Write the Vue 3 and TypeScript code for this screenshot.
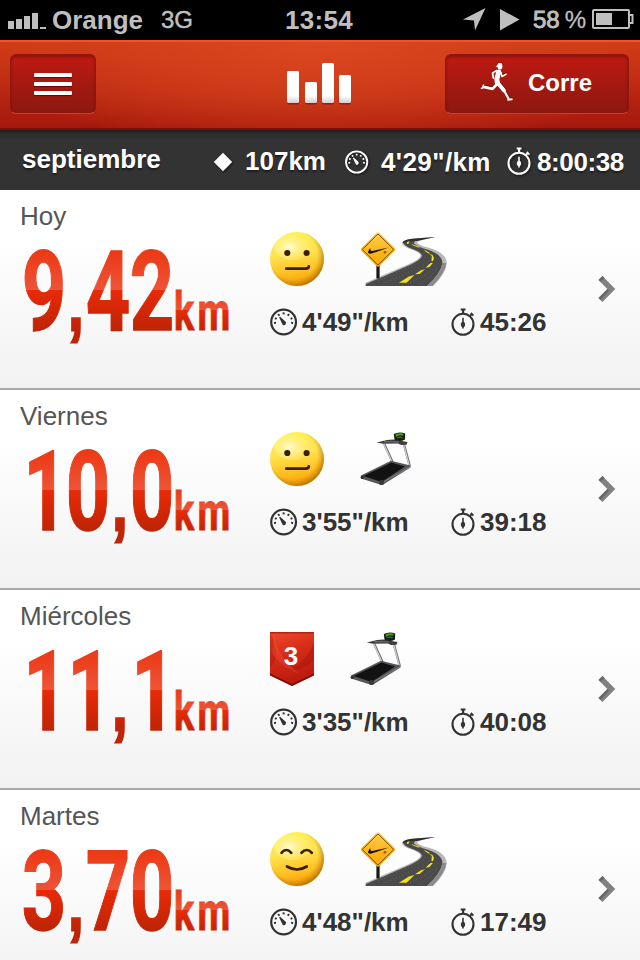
<template>
  <div class="app">
    <!-- Status bar -->
    <div class="status">
      <svg class="signal" width="38" height="16" viewBox="0 0 38 16">
        <path d="M0 8h6v8H0zM8 6h6v10H8zM16 3h6v13h-6zM24 0h6v16h-6zM32 14h6v2h-6z" fill="#bfbfbf" />
      </svg>
      <span class="carrier">Orange</span>
      <span class="network">3G</span>
      <span class="clock">13:54</span>
      <div class="status-right">
        <svg class="location" width="23" height="23" viewBox="0 0 23 23">
          <path d="M22.5 0 L12 22.5 L11 12.5 L0 11.5Z" fill="#bfbfbf" />
        </svg>
        <svg class="play" width="20" height="22" viewBox="0 0 20 22">
          <path d="M0 0 L19.5 10.5 L0 21.5Z" fill="#bfbfbf" />
        </svg>
        <span class="battery-text">58<span class="percent">%</span></span>
        <svg class="battery" width="42" height="20" viewBox="0 0 42 20">
          <rect x="1" y="1" width="36" height="18" rx="1" fill="none" stroke="#bfbfbf" stroke-width="2" />
          <rect x="4" y="4" width="16" height="12" fill="#bfbfbf" />
          <path d="M37 6h3.5v8H37" fill="none" stroke="#bfbfbf" stroke-width="2" />
        </svg>
      </div>
    </div>

    <!-- Navigation -->
    <header class="nav">
      <button class="btn btn-menu">
        <i></i><i></i><i></i>
      </button>
      <svg class="logo" width="66" height="44" viewBox="0 0 66 44">
        <defs>
          <linearGradient id="bar" x1="0" y1="0" x2="0" y2="42" gradientUnits="userSpaceOnUse">
            <stop offset="0.8" stop-color="#fff" />
            <stop offset="1" stop-color="#c9c9c9" />
          </linearGradient>
        </defs>
        <g fill="#7a1408" opacity="0.6" transform="translate(0 1.5)">
          <rect v-for="b in logoBars" :key="b.x" :x="b.x" :y="b.y" width="12" :height="41 - b.y" rx="1.5" />
        </g>
        <g fill="url(#bar)">
          <rect v-for="b in logoBars" :key="b.x" :x="b.x" :y="b.y" width="12" :height="41 - b.y" rx="1.5" />
        </g>
      </svg>
      <button class="btn btn-run">
        <svg width="34" height="40" viewBox="0 0 34 40">
          <g fill="none" stroke="#fff" stroke-linecap="round" stroke-linejoin="round">
            <path d="M18.7 10 L16.8 17 L17.5 21.5" stroke-width="5" />
            <path d="M16.5 8.5 L12.6 11 L13.3 16" stroke-width="1.8" />
            <path d="M21 10.5 L22 14.5 L26 12.2" stroke-width="1.6" />
            <path d="M17 22 L12.5 26.9 L5 25.2" stroke-width="2.8" />
            <path d="M5 25.2 L1.5 26.3 M3.5 23 L2.5 26" stroke-width="1.6" />
            <path d="M18.3 21.5 L24 28.5" stroke-width="3.8" />
            <path d="M24 28.5 L28.6 36.8" stroke-width="2.2" />
            <path d="M28.3 37.8 L31.8 37.2" stroke-width="2" />
          </g>
          <ellipse cx="19.9" cy="4.2" rx="2.5" ry="3.4" fill="#fff" />
          <path d="M20 1 L15.5 4.5 L19 5Z" fill="#fff" />
        </svg>
        <span>Corre</span>
      </button>
    </header>

    <!-- Month summary -->
    <div class="summary">
      <span class="month">{{ month.name }}</span>
      <svg class="diamond" width="20" height="20" viewBox="0 0 20 20">
        <path d="M10 0.7 L19.2 10 L10 19.3 L0.8 10Z" fill="#fff" />
      </svg>
      <span class="total">{{ month.distance }}</span>
      <svg class="sum-gauge" width="24" height="24" viewBox="0 0 28 28">
        <use href="#gauge" />
      </svg>
      <span class="sum-pace">{{ month.pace }}</span>
      <svg class="sum-watch" width="24" height="28" viewBox="0 0 24 28">
        <use href="#watch" />
      </svg>
      <span class="sum-time">{{ month.time }}</span>
    </div>

    <!-- Runs -->
    <div v-for="run in runs" :key="run.day" class="run">
      <div class="run-main">
        <div class="day">{{ run.day }}</div>
        <svg class="distance" width="230" height="110" viewBox="0 0 230 110">
          <g :transform="`scale(${digitScale} 1)`">
            <text class="digits" y="99"><tspan v-for="(g, i) in glyphs(run.distance)" :key="i" :x="g.x" :class="{ comma: g.char === ',' }">{{ g.char }}</tspan></text>
          </g>
          <g transform="scale(0.7 1)">
            <text class="unit" x="220 253.5" y="99">km</text>
          </g>
        </svg>
      </div>
      <div class="run-detail">
        <div class="badges">
          <svg v-if="run.badge === 'flag'" width="44" height="54" viewBox="0 0 44 54">
            <path d="M0 0H44V43L22 54L0 43Z" fill="url(#flagFill)" />
            <path d="M0 0 Q12 25 0 36Z M44 9 Q38 29 19 38 Q35 38 44 28Z" fill="#8b1008" opacity="0.28" />
            <path d="M4 6 Q10 27 30 42 Q14 37 2 22Z" fill="#ff6a4d" opacity="0.22" />
            <path d="M0 41.5 L22 52 L44 41.5 V43.5 L22 54 L0 43.5Z" fill="#7d0f0b" />
            <path d="M0 0.7H44" stroke="#b32312" stroke-width="1.4" />
            <text class="flag-text" x="21" y="33">3</text>
          </svg>
          <svg v-else width="54" height="54" viewBox="0 0 54 54">
            <circle cx="27" cy="27" r="27" fill="url(#face)" />
            <circle cx="27" cy="27" r="27" fill="url(#faceEdge)" />
            <ellipse cx="23" cy="15" rx="19" ry="13" fill="url(#faceShine)" />
            <g v-if="run.badge === 'neutral'">
              <circle cx="17.3" cy="21" r="3.1" fill="#3b1c05" />
              <circle cx="36.6" cy="21" r="3.1" fill="#3b1c05" />
              <path d="M16.3 36.7H35.5Q38.8 36.7 38.8 34.3" class="face-line" />
            </g>
            <g v-else>
              <path d="M11.5 20.8Q16.3 15.2 21.3 20.8M31.5 20.8Q36.8 15.2 41.8 20.8" class="face-line" />
              <path d="M17 34.5Q27 40.5 36.8 34.5" class="face-line" />
            </g>
          </svg>

          <svg v-if="run.terrain === 'road'" width="88" height="54" viewBox="0 0 88 54">
            <path d="M5.7 50.7 L18.3 45.3 L50 31.5 Q60 27 60.5 23.5 Q60 20 48 16.3 Q41 13 42.3 10.2 Q45 7 58 6.3 L75.5 5 Q60 8 57 10.3 Q58 13 68 15.5 Q86.5 20.5 86.7 31 Q86 42 73 54 H5.7Z" fill="#b8b8b8" />
            <path d="M5.7 52 L20 46 L51 32.5 Q62 27 62 23.5 Q61 19.5 49 15.7 Q42.5 12.5 43.5 10.2 Q46 7.7 60 6.7 Q53.5 9 54 11.5 Q58 15 67 17.5 Q82 22 82.5 31 Q81 41 67 54 H5.7Z" fill="#4a4a4a" />
            <path d="M82.5 31 Q81 41 67 54 H72.5 Q85 41 86.5 31Z" fill="#8b8b8b" />
            <path d="M42.3 10.2 Q45 7 58 6.3 L75.5 5 L57 9 Q50 8 43.5 11Z" fill="#2d2d2d" />
            <g stroke="#646464" stroke-width="1" stroke-dasharray="1 2.3" fill="none">
              <path d="M18 49 L53 34 Q65 28 66 23" />
              <path d="M24 51 L57 37 Q72 29 71 24" />
              <path d="M50 51 L66 43 Q77 35 78 29" />
              <path d="M60 52 L71 44 L79 34" />
            </g>
            <g fill="#f4e41a">
              <path d="M39 50.7 L49 44.5 L54.5 43 L46.5 50.7Z" />
              <path d="M55 42.3 L61 38.3 L65 37.2 L59.5 42Z" />
              <path d="M65.5 35.8 L70.5 31 L73 30.7 L69.5 35Z" />
              <path d="M71.5 29 L71.8 24 L69.5 22 L72.5 23 L74 26 L73 29Z" />
              <path d="M68.5 21.5 L63.5 18.2 L66 18.7 L70.3 21.3Z" />
              <path d="M58 15.5 L51 12.6 L53 12.4 L60 15.3Z" />
              <path d="M47 12 L47 10 L49.5 9.3 L48.5 11.7Z" />
            </g>
            <rect x="16.4" y="33" width="3.2" height="13.5" fill="#171717" />
            <rect x="5.3" y="4.8" width="25.4" height="25.4" rx="2" transform="rotate(45 18 17.5)" fill="url(#sign)" />
            <rect x="6.9" y="6.4" width="22.2" height="22.2" rx="1" transform="rotate(45 18 17.5)" fill="none" stroke="#6b4300" stroke-width="0.9" />
            <path d="M10.5 15.8 Q5.5 21.7 10.5 21.8 Q12 21.7 28.5 15.5 L13.5 18.8 Q9.3 19.5 10.5 15.8Z" fill="#161106" />
            <circle cx="25" cy="20.3" r="1.3" fill="#8f5d00" />
          </svg>
          <svg v-else width="54" height="54" viewBox="0 0 54 54">
            <path d="M24.3 12 L33 31 M44 12.5 L49.8 34" stroke="#777" stroke-width="2.4" />
            <path d="M23.8 12 L32.5 31 M43.7 12.5 L49.3 34" stroke="#cfcfcf" stroke-width="1.2" />
            <path d="M1 43.5 L31 28.7 L50.5 33.5 L50.5 35.5 L24 52 L20 52.5 L1 46.5Z" fill="#55575a" />
            <path d="M3.5 44 L31.5 30.5 L45 34.5 L21.5 50Z" fill="#121212" />
            <path d="M21.5 51 L50 35" stroke="#85878a" stroke-width="0.9" />
            <circle cx="21.6" cy="50.5" r="2.6" fill="#393b3c" />
            <circle cx="2.4" cy="45.2" r="1.8" fill="#303233" />
            <path d="M16.7 10.4 L27 8 L33 7.5 L47.5 10 L46.5 12.8 L41 13 L38 11.5 L23 11.8Z" fill="#3b3d3e" />
            <path d="M24 9.7 L39 10" stroke="#777" stroke-width="1" />
            <path d="M33.8 2 Q39.5 -1 45.2 1.6 L45 7.5 Q40 10.5 34.5 7.7Z" fill="#191c17" />
            <path d="M35.5 2.6 Q40 0.2 43.7 2 L42.5 3.8 Q39 2.5 36 5Z" fill="#45a51a" />
            <path d="M37 5.8 L40 5 L42.6 6" stroke="#347b17" stroke-width="1.2" fill="none" />
          </svg>
        </div>
        <div class="stats">
          <svg class="gauge" width="28" height="28" viewBox="0 0 28 28">
            <use href="#gauge" />
          </svg>
          <span class="pace">{{ run.pace }}</span>
          <svg class="watch" width="24" height="28" viewBox="0 0 24 28">
            <use href="#watch" />
          </svg>
          <span class="time">{{ run.time }}</span>
        </div>
      </div>
      <svg class="chevron" width="18" height="28" viewBox="0 0 18 28">
        <path d="M2.5 3 L13.3 14 L2.5 25" fill="none" stroke="#818181" stroke-width="5.6" />
        <path d="M0.5 5 L4.5 1 L6.5 3 L2.5 6.6Z M0.5 23 L2.5 25 L11 15.5 L9.5 14Z" fill="#666" />
      </svg>
    </div>

    <!-- Shared symbols and gradients -->
    <svg class="defs" width="0" height="0">
      <defs>
        <g id="gauge">
          <circle cx="13.6" cy="14" r="12.4" fill="none" stroke="currentColor" stroke-width="2.2" />
          <path d="M9.7 9.2 L15.3 14.3 Q15.7 16.8 13.3 16.6Z" fill="currentColor" stroke="currentColor" stroke-width="1.2" />
          <g fill="currentColor">
            <rect v-for="t in ticks" :key="t" x="12.6" y="4.4" width="2" height="2" :transform="`rotate(${t} 13.6 14)`" />
          </g>
        </g>
        <g id="watch">
          <circle cx="12" cy="16.3" r="10.5" fill="none" stroke="currentColor" stroke-width="2.1" />
          <path d="M9.7 0.5h4.8v2h-1.3v3.4h-2.2V2.5H9.7z" fill="currentColor" />
          <path d="M18.8 8 L21 6 M19.8 5 L22.4 7.6" stroke="currentColor" stroke-width="1.8" />
          <path d="M12 9.8 V20.5" stroke="currentColor" stroke-width="1.6" />
          <ellipse cx="12" cy="16.5" rx="2.1" ry="2.8" fill="currentColor" />
        </g>
        <linearGradient id="digitFill" x1="0" y1="19" x2="0" y2="99" gradientUnits="userSpaceOnUse">
          <stop offset="0" stop-color="#ec3814" />
          <stop offset="0.5" stop-color="#ec5437" />
          <stop offset="0.5" stop-color="#e92a07" />
          <stop offset="1" stop-color="#be2406" />
        </linearGradient>
        <linearGradient id="unitFill" x1="0" y1="59" x2="0" y2="99" gradientUnits="userSpaceOnUse">
          <stop offset="0" stop-color="#ec3814" />
          <stop offset="0.5" stop-color="#ec5437" />
          <stop offset="0.5" stop-color="#e92a07" />
          <stop offset="1" stop-color="#c52506" />
        </linearGradient>
        <linearGradient id="face" x1="0.4" y1="0" x2="0.55" y2="1">
          <stop offset="0" stop-color="#fff04f" />
          <stop offset="0.4" stop-color="#ffe24f" />
          <stop offset="0.72" stop-color="#ffc224" />
          <stop offset="1" stop-color="#f29a04" />
        </linearGradient>
        <radialGradient id="faceEdge" cx="0.43" cy="0.43" r="0.58">
          <stop offset="0.76" stop-color="#c97800" stop-opacity="0" />
          <stop offset="1" stop-color="#9a5a00" stop-opacity="0.6" />
        </radialGradient>
        <radialGradient id="faceShine" cx="0.4" cy="0.5" r="0.6">
          <stop offset="0" stop-color="#fffde0" stop-opacity="0.9" />
          <stop offset="1" stop-color="#fff58a" stop-opacity="0.1" />
        </radialGradient>
        <linearGradient id="sign" x1="0" y1="0" x2="1" y2="1">
          <stop offset="0" stop-color="#ffcf5a" />
          <stop offset="0.5" stop-color="#ffb91d" />
          <stop offset="1" stop-color="#f9a500" />
        </linearGradient>
        <linearGradient id="flagFill" x1="0" y1="0" x2="0.3" y2="1">
          <stop offset="0" stop-color="#f04a2c" />
          <stop offset="0.5" stop-color="#d52a17" />
          <stop offset="1" stop-color="#bb1a10" />
        </linearGradient>
      </defs>
    </svg>
  </div>
</template>

<script setup lang="ts">
interface Run {
  day: string;
  distance: string;
  pace: string;
  time: string;
  badge: 'neutral' | 'happy' | 'flag';
  terrain: 'road' | 'treadmill';
}

const month = { name: 'septiembre', distance: '107km', pace: `4'29"/km`, time: '8:00:38' };

const runs: Run[] = [
  { day: 'Hoy', distance: '9,42', pace: `4'49"/km`, time: '45:26', badge: 'neutral', terrain: 'road' },
  { day: 'Viernes', distance: '10,0', pace: `3'55"/km`, time: '39:18', badge: 'neutral', terrain: 'treadmill' },
  { day: 'Miércoles', distance: '11,1', pace: `3'35"/km`, time: '40:08', badge: 'flag', terrain: 'treadmill' },
  { day: 'Martes', distance: '3,70', pace: `4'48"/km`, time: '17:49', badge: 'happy', terrain: 'road' },
];

const logoBars = [
  { x: 1, y: 9 },
  { x: 19, y: 20 },
  { x: 36, y: 1 },
  { x: 53, y: 13 },
];

const ticks = [-96, -66, -34, 0, 34, 66, 96];

// Digits are squeezed horizontally and set in fixed cells
const digitScale = 0.7;
const digitWidth = 44;
const commaWidth = 20;

function glyphs(value: string) {
  let x = 2;
  return [...value].map((char) => {
    const w = char === ',' ? commaWidth : digitWidth;
    const shift = char === '1' ? 1.5 : 0;
    const center = x + w / 2 + shift;
    x += w;
    return { char, x: (center / digitScale).toFixed(2) };
  });
}
</script>

<style>
body {
  background: #fff;
}
</style>

<style scoped>
.app {
  width: 640px;
  height: 960px;
  overflow: hidden;
  font-family: "Liberation Sans", Arial, sans-serif;
  font-size: 26px;
  line-height: 30px;
  color: #333;
}

svg {
  display: block;
  flex: none;
}

.status {
  display: flex;
  height: 40px;
  background: #000;
  color: #bfbfbf;
  box-sizing: border-box;
  padding: 5px 6px 0 8px;
  font-weight: bold;
}

.signal {
  margin-top: 8px;
}

.carrier {
  width: 109px;
  margin-left: 6px;
}

.network {
  width: 124px;
  font-size: 24px;
  font-weight: normal;
  -webkit-text-stroke: 0.5px #bfbfbf;
}

.clock {
  letter-spacing: 0.3px;
}

.status-right {
  display: flex;
  margin-left: auto;
}

.location {
  margin: 3px 14px 0 0;
}

.play {
  margin: 4px 13px 0 0;
}

.battery-text {
  font-size: 24px;
  font-weight: normal;
  -webkit-text-stroke: 0.9px #bfbfbf;
}

.percent {
  margin-left: 5px;
  -webkit-text-stroke-width: 0.3px;
}

.battery {
  margin: 4px 0 0 6px;
}

.nav {
  display: flex;
  justify-content: space-between;
  align-items: flex-start;
  height: 90px;
  box-sizing: border-box;
  padding: 12px 11px 0 10px;
  border-top: 2px solid #f3502d;
  border-bottom: 2px solid #820d0b;
  background:
    radial-gradient(ellipse 360px 110px at 50% 0, rgba(220, 72, 32, 0.95), rgba(214, 66, 28, 0.7) 50%, rgba(200, 44, 18, 0)),
    linear-gradient(#d13a17, #a5180d);
}

.btn {
  height: 60px;
  box-sizing: border-box;
  border: 1px solid #8e170e;
  border-bottom-color: #c44330;
  border-radius: 6px;
  background: linear-gradient(#bf1a11, #8b1810);
  box-shadow: inset 0 2px 3px rgba(90, 5, 0, 0.45);
  color: #fff;
  font: bold 24px/30px "Liberation Sans", Arial, sans-serif;
}

.btn-menu {
  display: flex;
  flex-direction: column;
  align-items: center;
  gap: 5px;
  width: 86px;
  padding: 18px 0 0;
}

.btn-menu i {
  width: 38px;
  height: 4px;
  border-radius: 1px;
  background: #fff;
  box-shadow: 0 1px 1px #5c0b07;
}

.logo {
  margin: 8px 0 0 97px;
}

.btn-run {
  display: flex;
  width: 184px;
  padding: 7px 0 0 34px;
}

.btn-run svg {
  filter: drop-shadow(0 -1px 0 rgba(70, 5, 0, 0.6));
}

.btn-run span {
  margin: 6px 0 0 14px;
}

.summary {
  display: flex;
  height: 60px;
  box-sizing: border-box;
  padding: 17px 0 0 22px;
  background: linear-gradient(#1c1c1c, #2e2e2e 4px, #333 10px);
  color: #fff;
  font-weight: bold;
  text-shadow: 0 2px 2px rgba(0, 0, 0, 0.45);
}

.summary svg {
  filter: drop-shadow(1px 1px 1px rgba(0, 0, 0, 0.6));
}

.month {
  width: 191px;
  margin-top: -3px;
}

.diamond {
  margin-top: 5px;
}

.total {
  width: 99px;
  margin: -1px 0 0 12px;
}

.sum-gauge {
  margin: 3px 0 0 1px;
}

.sum-pace {
  width: 126px;
  margin-left: 12px;
  letter-spacing: 0.4px;
}

.sum-watch {
  margin-top: 0;
}

.sum-time {
  margin-left: 6px;
  letter-spacing: -0.4px;
}

.run {
  display: flex;
  height: 200px;
  box-sizing: border-box;
  padding-left: 20px;
  border-bottom: 2px solid #a9a9a9;
  background: linear-gradient(#fff 25%, #f2f2f2);
}

.run-main {
  width: 250px;
  padding-top: 11px;
}

.day {
  color: #555;
}

.distance {
  overflow: visible;
}

.digits {
  font: 700 111px Roboto, sans-serif;
  text-anchor: middle;
  fill: url(#digitFill);
  stroke: url(#digitFill);
  stroke-width: 1.3;
}

/* Short square comma, heavier than the digits */
.comma {
  font: bold 76px "Liberation Sans", Arial, sans-serif;
  stroke-width: 3;
}

.unit {
  font: bold 54px Roboto, sans-serif;
  fill: url(#unitFill);
  stroke: url(#unitFill);
  stroke-width: 0.8;
}

.run-detail {
  width: 328px;
  padding-top: 42px;
}

.badges {
  display: flex;
  gap: 36px;
}

.face-line {
  fill: none;
  stroke: #3b1c05;
  stroke-width: 2.7;
  stroke-linecap: round;
}

.flag-text {
  font: bold 26px "Liberation Sans", Arial, sans-serif;
  text-anchor: middle;
  fill: #fff;
}

.stats {
  display: flex;
  margin-top: 21px;
  font-weight: bold;
}

.gauge,
.watch {
  margin-top: 1px;
}

.pace {
  width: 149px;
  margin-left: 4px;
}

.time {
  margin-left: 5px;
}

.chevron {
  align-self: center;
}

.defs {
  position: absolute;
}
</style>
